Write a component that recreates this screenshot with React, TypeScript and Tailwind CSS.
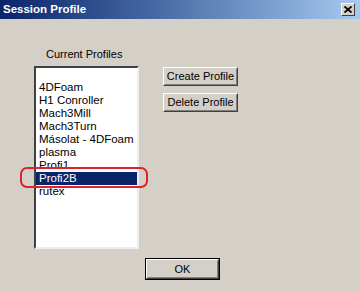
const profiles = [
  "",
  "4DFoam",
  "H1 Conroller",
  "Mach3Mill",
  "Mach3Turn",
  "Másolat - 4DFoam",
  "plasma",
  "Profi1",
  "Profi2B",
  "rutex",
];

function WinButton({ label, isDefault }: { label: string; isDefault?: boolean }) {
  const face = (
    <div className="flex h-full w-full items-center justify-center border border-t-white border-l-white border-r-[#404040] border-b-[#404040] bg-[#d4d0c8]">
      <div className="flex h-full w-full items-center justify-center border border-t-[#d4d0c8] border-l-[#d4d0c8] border-r-[#808080] border-b-[#808080] text-[11px] leading-none text-black">
        {label}
      </div>
    </div>
  );
  if (isDefault) {
    return <div className="h-[22px] w-[75px] border border-black">{face}</div>;
  }
  return <div className="h-[19px] w-[75px]">{face}</div>;
}

export default function App() {
  return (
    <div
      className="relative flex h-[292px] w-[360px] flex-col overflow-hidden bg-[#d4d0c8]"
      style={{ fontFamily: '"Liberation Sans", Arial, sans-serif' }}
    >
      {/* title bar */}
      <div className="flex h-[19px] items-center justify-between bg-gradient-to-r from-[#0a246a] to-[#a6caf0] pl-[3px] pr-[5px]">
        <span className="text-[11.5px] font-bold text-white">Session Profile</span>
        <div className="flex h-[13px] w-[14px] items-center justify-center border border-t-white border-l-white border-r-[#404040] border-b-[#404040] bg-[#d4d0c8]">
          <svg width="8" height="7" viewBox="0 0 8 7">
            <path d="M0.5 0.5 L7.5 6.5 M7.5 0.5 L0.5 6.5" stroke="black" strokeWidth="1.8" />
          </svg>
        </div>
      </div>

      {/* body */}
      <div className="flex pl-[34px] pt-[29px]">
        <div className="flex w-[105px] flex-col">
          <div className="pl-[12px] text-[11px] leading-[13px] text-black">Current Profiles</div>
          <div className="mt-[5px] h-[183px] border-2 border-t-[#404040] border-l-[#404040] border-r-[#eeeeee] border-b-[#eeeeee] bg-white">
            {profiles.map((p, i) => (
              <div
                key={i}
                className={
                  "h-[13px] pl-[3px] text-[11.5px] leading-[13px] whitespace-nowrap " +
                  (p === "Profi2B" ? "bg-[#0a246a] text-white" : "text-black")
                }
              >
                {p}
              </div>
            ))}
          </div>
        </div>
        <div className="ml-[24px] flex flex-col gap-[7px] pt-[19px]">
          <WinButton label="Create Profile" />
          <WinButton label="Delete Profile" />
        </div>
      </div>

      <div className="mt-[9px] pl-[145px]">
        <WinButton label="OK" isDefault />
      </div>

      {/* red annotation */}
      <div className="absolute left-[20px] top-[167px] h-[21px] w-[128px] rounded-[7px] border-2 border-[#e0232b]" />
    </div>
  );
}
